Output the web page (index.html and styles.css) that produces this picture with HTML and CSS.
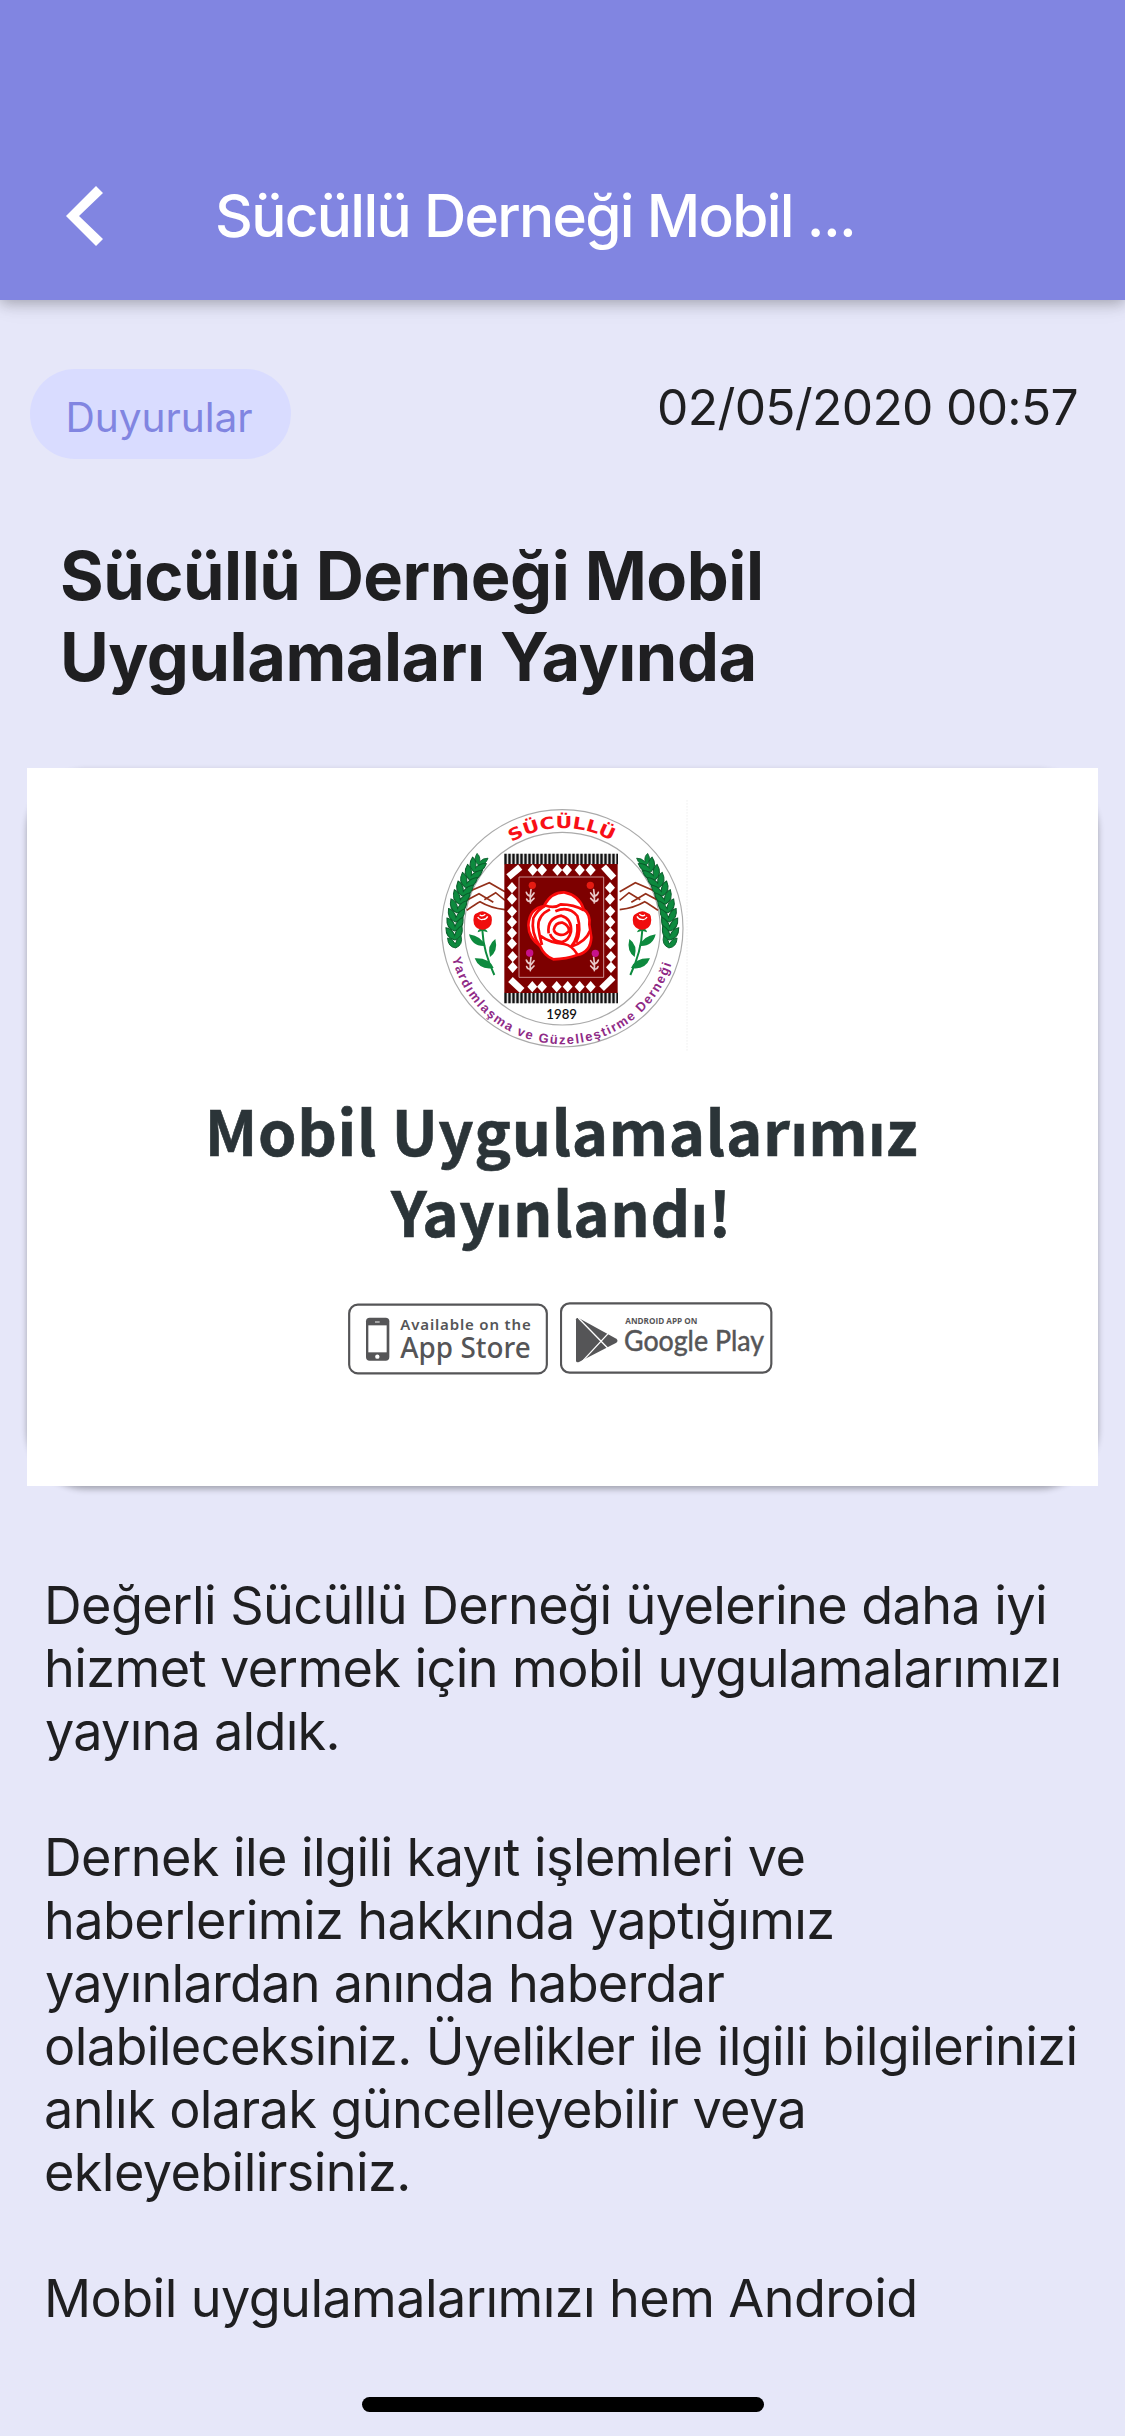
FILE: index.html
```html
<!DOCTYPE html>
<html lang="tr">
<head>
<meta charset="utf-8">
<title>Sücüllü Derneği</title>
<link rel="stylesheet" href="styles.css">
</head>
<body>
<header class="appbar">
  <svg class="back" viewBox="0 0 37 60" width="37" height="60"><path d="M30 0 37 7 13 30 37 53 30 60 0 30Z" fill="#fff"/></svg>
  <h1 class="appbar-title">Sücüllü Derneği Mobil ...</h1>
</header>
<main class="article">
  <div class="meta">
    <span class="chip">Duyurular</span>
    <time class="date">02/05/2020 00:57</time>
  </div>
  <h2 class="headline">Sücüllü Derneği Mobil<br>Uygulamaları Yayında</h2>
  <section class="card">
    <svg class="logo" viewBox="0 0 810 810" width="270" height="270">
      <defs>
        <path id="arc-top" d="M245 142A299 299 0 0 1 553 142"/>
        <path id="arc-bottom" d="M66 490A342 342 0 0 0 729 490"/>
        <path id="dia" d="M0-17 15 0 0 17-15 0Z"/>
        <path id="leaves" d="M0 14Q-27 8-25-24Q-8-22 0 0Q6-20 23-28Q28 6 0 14Z" fill="#0d8a3e" stroke="#0a5c2b" stroke-width="3"/>
        <g id="sprig" fill="none" stroke="#e9c9c9" stroke-width="5" stroke-linecap="round"><path d="M0 14Q-4 34-2 54M-1 34Q-12 31-14 22M0 36 9 24M-1 50Q-11 50-13 42M-1 50 9 40"/></g>
        <g id="side">
          <g fill="none" stroke="#93301a" stroke-width="5">
            <path d="M122 287 178 263 225 290M113 314 147 296 190 322M163 314 197 293 225 316M110 346Q138 326 150 320Q180 338 225 344"/>
          </g>
          <use href="#leaves" transform="translate(149 200) rotate(28) scale(.75)"/>
          <use href="#leaves" transform="translate(137 218) rotate(30) scale(.95)"/>
          <use href="#leaves" transform="translate(124 241) rotate(27)"/>
          <use href="#leaves" transform="translate(111 264) rotate(23)"/>
          <use href="#leaves" transform="translate(100 289) rotate(19)"/>
          <use href="#leaves" transform="translate(91 314) rotate(15)"/>
          <use href="#leaves" transform="translate(83 340) rotate(11)"/>
          <use href="#leaves" transform="translate(78 367) rotate(6)"/>
          <use href="#leaves" transform="translate(75 394) rotate(2)"/>
          <use href="#leaves" transform="translate(74 421) rotate(-3)"/>
          <use href="#leaves" transform="translate(76 447) rotate(-6) scale(.85)"/>
          <path d="M157 405Q160 470 193 540" fill="none" stroke="#0d8a3e" stroke-width="6"/>
          <path d="M143 412Q144 402 157 400Q170 402 173 412L157 407Z" fill="#0d8a3e"/>
          <path d="M166 453Q126 456 117 418Q155 424 166 453ZM180 486Q170 450 196 432Q205 468 180 486ZM191 519Q148 526 134 490Q178 488 191 519Z" fill="#0d8a3e"/>
          <path d="M132 388Q126 356 142 354Q158 342 176 356Q190 360 184 388Q174 405 157 404Q140 404 132 388Z" fill="#f00d0d"/>
          <path d="M143 366Q149 376 158 373Q168 374 173 364M149 359Q156 366 166 358" fill="none" stroke="#fff" stroke-width="4"/>
        </g>
      </defs>
      <path d="M771 15V770" stroke="#e9e9e9" stroke-width="2" stroke-dasharray="5 4"/>
      <ellipse cx="397" cy="400" rx="362" ry="356" fill="none" stroke="#aaa" stroke-width="3.5"/>
      <ellipse cx="397" cy="401" rx="294" ry="289" fill="none" stroke="#aaa" stroke-width="3.5"/>
      <text class="arc-name"><textPath href="#arc-top" textLength="315" lengthAdjust="spacingAndGlyphs">SÜCÜLLÜ</textPath></text>
      <text class="arc-sub"><textPath href="#arc-bottom" textLength="886" lengthAdjust="spacing">Yardımlaşma ve Güzelleştirme Derneği</textPath></text>
      <text class="year" x="349" y="672" textLength="92" lengthAdjust="spacingAndGlyphs">1989</text>
      <use href="#side"/>
      <use href="#side" transform="translate(794 0) scale(-1 1)"/>
      <path d="M223 192H564M223 609H564" stroke="#ddd" stroke-width="31"/>
      <path d="M223 192H564M223 609H564" stroke="#111" stroke-width="31" stroke-dasharray="7 5"/>
      <path d="M223 207H563V594H223Z" fill="#7d0000"/>
      <path d="M267 246H521V547H267Z" fill="none" stroke="#c98f8f" stroke-width="3"/>
      <g fill="#fff">
        <use href="#dia" x="246" y="278"/><use href="#dia" x="246" y="312"/><use href="#dia" x="246" y="349"/><use href="#dia" x="246" y="381"/><use href="#dia" x="246" y="414"/><use href="#dia" x="246" y="446"/><use href="#dia" x="248" y="485"/><use href="#dia" x="248" y="517"/>
        <use href="#dia" x="540" y="278"/><use href="#dia" x="540" y="312"/><use href="#dia" x="541" y="349"/><use href="#dia" x="541" y="381"/><use href="#dia" x="541" y="414"/><use href="#dia" x="541" y="446"/><use href="#dia" x="543" y="485"/><use href="#dia" x="543" y="517"/>
        <use href="#dia" x="308" y="225"/><use href="#dia" x="336" y="225"/><use href="#dia" x="382" y="225"/><use href="#dia" x="411" y="225"/><use href="#dia" x="449" y="225"/><use href="#dia" x="482" y="225"/>
        <use href="#dia" x="307" y="575"/><use href="#dia" x="336" y="575"/><use href="#dia" x="380" y="575"/><use href="#dia" x="413" y="575"/><use href="#dia" x="449" y="575"/><use href="#dia" x="482" y="575"/>
        <rect x="-23" y="-10" width="46" height="20" transform="translate(253 231) rotate(-40)"/>
        <rect x="-23" y="-10" width="46" height="20" transform="translate(536 232) rotate(48)"/>
        <rect x="-24" y="-10" width="48" height="20" transform="translate(259 570) rotate(43)"/>
        <rect x="-24" y="-10" width="48" height="20" transform="translate(532 564) rotate(-44)"/>
      </g>
      <use href="#sprig" x="303" y="270"/><use href="#sprig" transform="translate(491 270) scale(-1 1)"/>
      <use href="#sprig" x="303" y="473"/><use href="#sprig" transform="translate(491 473) scale(-1 1)"/>
      <circle cx="307" cy="271" r="11" fill="#e51b12"/><circle cx="481" cy="271" r="11" fill="#e51b12"/>
      <circle cx="299" cy="474" r="11" fill="#c7128a"/><circle cx="496" cy="475" r="11" fill="#c7128a"/>
      <g transform="translate(210 165)" stroke="#fa0a0a" stroke-width="8" stroke-linejoin="round" fill="#fff">
        <path d="M134 164Q155 126 193 127Q238 136 251 178Q272 192 268 224L274 262Q272 306 232 315Q200 327 160 328Q133 318 120 288Q86 265 85 226Q88 174 134 168Z"/>
        <path fill="none" d="M134 166Q163 177 182 163Q222 163 252 181M150 178Q112 196 115 232Q118 258 126 285M166 184Q206 166 232 198Q246 244 228 278M146 250Q140 205 184 197Q216 206 213 245Q207 271 186 276Q158 274 150 252M161 240Q166 216 188 218Q206 225 207 242Q196 257 178 254Q166 252 161 240M120 257Q148 278 192 282Q216 286 232 313M232 222Q236 266 213 290Q257 276 270 242M134 168Q112 180 100 204Q92 250 120 288"/>
      </g>
    </svg>
    <h3 class="card-title">Mobil Uygulamalarımız<br>Yayınlandı!</h3>
    <div class="badges">
      <svg viewBox="24 36 600 219" width="200" height="73">
        <rect x="27.5" y="44" width="593" height="206" rx="26" fill="none" stroke="#555557" stroke-width="6.5"/>
        <rect x="78" y="83" width="70" height="129" rx="11" fill="#555557"/>
        <path d="M85 106H140V187H85Z" fill="#fff"/><circle cx="112" cy="200" r="6.5" fill="#fff"/><path d="M105 96H119" stroke="#ccc" stroke-width="4"/>
        <text class="store-small" x="181" y="120" textLength="391" lengthAdjust="spacing">Available on the</text>
        <text class="store-big" x="181" y="204" textLength="391" lengthAdjust="spacingAndGlyphs">App Store</text>
      </svg>
      <svg viewBox="15 36 639 219" width="213" height="73">
        <rect x="18" y="40" width="631" height="208" rx="26" fill="none" stroke="#555557" stroke-width="6.5"/>
        <path d="M63 88Q64 82 72 85L184 146Q191 152 184 158L72 216Q64 219 63 213Z" fill="#555557"/>
        <path d="M70 84 158 174M79 217 160 130" stroke="#fff" stroke-width="4"/>
        <text class="play-small" x="211" y="101" textLength="216" lengthAdjust="spacingAndGlyphs">ANDROID APP ON</text>
        <text class="play-big" x="207" y="184" textLength="420" lengthAdjust="spacingAndGlyphs">Google Play</text>
      </svg>
    </div>
  </section>
  <div class="body">
    <p>Değerli Sücüllü Derneği üyelerine daha iyi<br>hizmet vermek için mobil uygulamalarımızı<br><span class="tight">yayına aldık.</span></p>
    <p>Dernek ile ilgili kayıt işlemleri ve<br>haberlerimiz hakkında yaptığımız<br><span class="tight">yayınlardan anında haberdar</span><br>olabileceksiniz. Üyelikler ile ilgili bilgilerinizi<br>anlık olarak güncelleyebilir veya<br>ekleyebilirsiniz.</p>
    <p>Mobil uygulamalarımızı hem Android</p>
  </div>
</main>
<div class="home-indicator"></div>
</body>
</html>
```
FILE: styles.css
```css
* { box-sizing: border-box; margin: 0; padding: 0; }
body {
  position: relative;
  width: 1125px;
  height: 2436px;
  overflow: hidden;
  background: #e6e7f9;
  color: #1f1f21;
  font-family: Inter, "Liberation Sans", sans-serif;
}
svg { display: block; flex: none; }
.appbar {
  display: flex;
  align-items: center;
  height: 300px;
  padding: 132px 66px 0;
  background: #8185e1;
  box-shadow: 0 3px 14px rgba(0, 0, 0, .27), 0 6px 24px rgba(0, 0, 0, .05);
}
.appbar-title {
  margin-left: 112px;
  color: #fff;
  font-size: 58.6px;
  font-weight: 550;
  line-height: 72px;
  letter-spacing: -1.7px;
  white-space: nowrap;
}
.article { padding-top: 69px; }
.meta {
  display: flex;
  justify-content: space-between;
  align-items: flex-start;
  padding: 0 47px 0 30px;
}
.chip {
  width: 261px;
  height: 90px;
  padding: 5px 3px 0 0;
  border-radius: 45px;
  background: #d9dcff;
  color: #8185e1;
  font-size: 40.7px;
  line-height: 87px;
  letter-spacing: -.1px;
  text-align: center;
}
.date { font-size: 49.7px; line-height: 76px; letter-spacing: -.67px; }
.headline {
  margin-top: 76px;
  padding-left: 60px;
  font-size: 66.7px;
  font-weight: 700;
  line-height: 81px;
  letter-spacing: -.47px;
}
.card {
  position: relative;
  display: flex;
  flex-direction: column;
  align-items: center;
  width: 1071px;
  height: 718px;
  margin: 71px 0 0 27px;
  padding-top: 27px;
  background: #fff;
}
.card::before {
  content: "";
  position: absolute;
  inset: 0;
  z-index: -1;
  border-radius: 60px;
  box-shadow: 0 3px 6px rgba(0, 0, 0, .3);
}
.logo { margin-left: 5px; }
.arc-name { font: 700 50px "DejaVu Sans", sans-serif; fill: #f80f16; }
.arc-sub { font: 700 39px "Liberation Sans", sans-serif; fill: #8f2a86; }
.year { font: 600 42px Lato, sans-serif; fill: #111; }
.card-title {
  margin-top: 24px;
  color: #2b3438;
  font: 700 61.6px/81px "Noto Sans CJK JP", sans-serif;
  letter-spacing: .65px;
  text-align: center;
  padding-right: 2px;
  -webkit-text-stroke: .6px #2b3438;
}
.badges { display: flex; gap: 12px; margin: 51px 4px 0 0; }
.store-small { font: 600 45px "Noto Sans", sans-serif; fill: #555557; }
.store-big { font: 500 84px "Noto Sans", sans-serif; fill: #555557; }
.play-small { font: 700 25px "Open Sans", sans-serif; fill: #555557; }
.play-big { font: 400 84px Lato, sans-serif; fill: #555557; stroke: #555557; stroke-width: 1.5px; }
.body {
  display: flex;
  flex-direction: column;
  gap: 63px;
  margin-top: 88px;
  padding-left: 44px;
  font-size: 52.2px;
  line-height: 63px;
  letter-spacing: -.6px;
  white-space: nowrap;
}
.tight { margin-left: 1px; letter-spacing: -.76px; }
.home-indicator {
  position: absolute;
  left: 362px;
  bottom: 24px;
  width: 402px;
  height: 15px;
  border-radius: 8px;
  background: #000;
}
```
